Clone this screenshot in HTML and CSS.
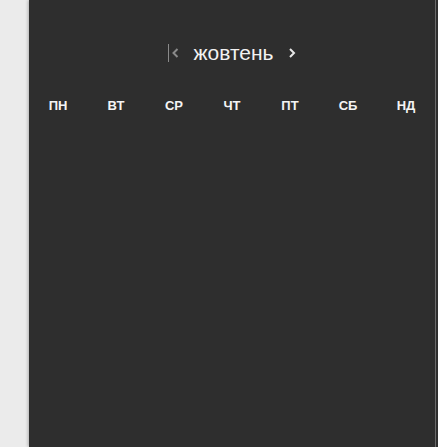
FILE: index.html
```html
<!DOCTYPE html>
<html lang="uk">
<head>
<meta charset="utf-8">
<link rel="stylesheet" href="styles.css">
</head>
<body>
<div class="page">
  <div class="gutter"></div>
  <div class="panel">
    <div class="header">
      <button class="nav prev" aria-label="Попередній місяць">
        <svg width="12" height="18" viewBox="0 0 12 18"><rect x="0" y="0" width="1" height="18" fill="#8a8a8a"/><path d="M9.5 5 L5.5 9 L9.5 13" fill="none" stroke="#8a8a8a" stroke-width="2"/></svg>
      </button>
      <span class="month">жовтень</span>
      <button class="nav next" aria-label="Наступний місяць">
        <svg width="8" height="18" viewBox="0 0 8 18"><path d="M2 5 L6 9 L2 13" fill="none" stroke="#e8e8e8" stroke-width="2"/></svg>
      </button>
    </div>
    <div class="weekdays">
      <span>ПН</span><span>ВТ</span><span>СР</span><span>ЧТ</span><span>ПТ</span><span>СБ</span><span>НД</span>
    </div>
  </div>
  <div class="edge"></div>
</div>
</body>
</html>
```

FILE: styles.css
```css
html, body {
  margin: 0;
  padding: 0;
  height: 100%;
  background: #ebebeb;
  font-family: "Liberation Sans", Arial, sans-serif;
}
.page {
  display: flex;
  height: 447px;
}
.gutter {
  width: 29px;
  flex: none;
  background: #ebebeb;
}
.panel {
  flex: none;
  width: 406px;
  background: #2e2e2e;
  box-shadow: -1px 0 3px rgba(0,0,0,0.25);
  color: #f0f0f0;
}
.edge {
  flex: none;
  width: 3px;
  background: #2e2e2e;
  border-left: 1px solid #6a6a6a;
  box-sizing: border-box;
}
.header {
  display: flex;
  justify-content: center;
  align-items: center;
  padding-top: 43px;
  height: 20px;
}
.nav {
  background: none;
  border: 0;
  padding: 0;
  margin: 0;
  display: flex;
  align-items: center;
}
.prev { margin-right: 13px; }
.next { margin-left: 14px; }
.month {
  font-size: 21px;
  color: #f2f2f2;
  line-height: 20px;
}
.weekdays {
  display: grid;
  grid-template-columns: repeat(7, 1fr);
  margin-top: 35px;
  font-size: 13px;
  font-weight: bold;
  text-align: center;
  color: #f4f4f4;
  line-height: 15px;
}
```
